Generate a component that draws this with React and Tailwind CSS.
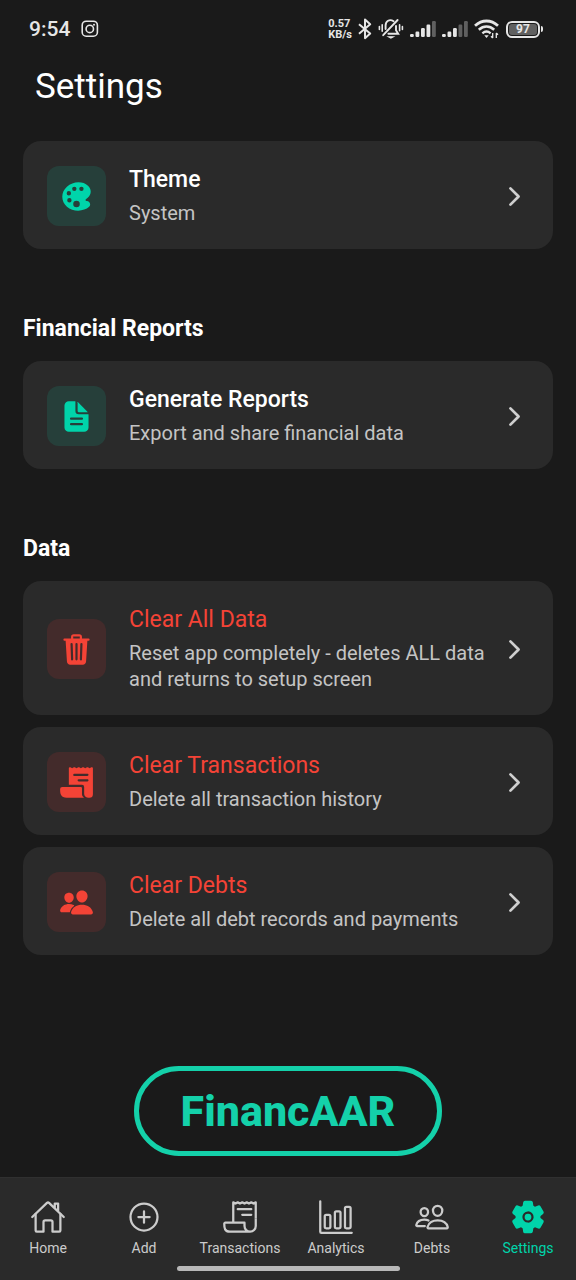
import React from 'react';
import {
  IoColorPalette,
  IoDocumentText,
  IoTrash,
  IoReceipt,
  IoPeople,
  IoHomeOutline,
  IoAddCircleOutline,
  IoReceiptOutline,
  IoBarChartOutline,
  IoPeopleOutline,
  IoSettings,
  IoChevronForward,
} from 'react-icons/io5';

function InstagramGlyph() {
  return (
    <svg className="size-[18px]" viewBox="0 0 18 18" fill="none" stroke="currentColor" strokeWidth="1.6" aria-label="Instagram notification">
      <rect x="1.2" y="1.2" width="15.2" height="15" rx="4" />
      <circle cx="8.8" cy="8.9" r="3.7" />
      <circle cx="13" cy="4.7" r="1" fill="currentColor" stroke="none" />
    </svg>
  );
}

function BluetoothGlyph() {
  return (
    <svg className="h-[22px] w-[14px]" viewBox="0 0 14 22" fill="none" stroke="currentColor" strokeWidth="2" strokeLinejoin="round" aria-label="Bluetooth">
      <path d="M1 6.2 12.2 15.6 7 20.2V1.6L12.2 6.3 1 15.8" />
    </svg>
  );
}

function MutedBellGlyph() {
  return (
    <svg className="h-[22px] w-[26px]" viewBox="0 0 26 22" fill="none" stroke="currentColor" strokeWidth="1.9" strokeLinecap="round" aria-label="Vibrate">
      <path d="M15.6 3.2C11.5.6 7.600 3.200 7.600 7.600v3.400" />
      <path d="M18 8v4.200l2.200 3.600H10.400" />
      <path d="M19.600 2 5.200 17.200" />
      <path d="M1.400 8.500v3M4.200 6.800v6.400M24.400 8.500v3M21.600 6.800v6" strokeWidth="1.600" />
      <path d="M10.600 18.800h4.600l-2.300 1.300z" fill="currentColor" strokeWidth="1.200" />
    </svg>
  );
}

function SignalGlyph({ level }) {
  const bars = [
    [0, 14, 3],
    [5.5, 11.5, 5.5],
    [11, 8, 9],
    [16.5, 4.5, 12.5],
    [22, 1, 16],
  ];
  return (
    <svg className="h-[18px] w-[26px]" viewBox="0 0 26 18" fill="currentColor" aria-label="Mobile signal">
      {bars.map(([x, y, h], i) => (
        <rect key={x} x={x} y={y} width="3.8" height={h} rx="1.2" opacity={i < level ? 1 : 0.35} />
      ))}
    </svg>
  );
}

function WifiGlyph() {
  return (
    <svg className="h-[20px] w-[26px]" viewBox="0 0 26 20" fill="none" stroke="currentColor" aria-label="Wi-Fi">
      <path d="M1 6.800C8 .4 17 .4 24 6.800" strokeWidth="2.800" />
      <path d="M4.800 10.800c4.700-4.200 10.700-4.200 15.400 0" strokeWidth="2.600" />
      <path d="M8.400 14.300c2.600-2.300 5.600-2.300 8.200 0" strokeWidth="2.400" />
      <path d="M10.300 16.200h4.400L12.500 19z" fill="currentColor" stroke="none" />
      <path d="M18.700 14v5M17 17.300l1.700 1.700M22.300 19v-5M24 15.700 22.300 14" strokeWidth="1.300" />
    </svg>
  );
}

function Battery({ value }) {
  return (
    <div className="flex items-center gap-px" aria-label="Battery">
      <div className="flex h-[17px] w-[34px] items-center justify-center rounded-[6px] border-2 border-[#e6e6e6] p-px">
        <span className="flex h-full w-full items-center justify-center rounded-[3px] bg-[#606060] text-[12px] leading-[12px] font-bold">{value}</span>
      </div>
      <span className="h-[6px] w-[2px] rounded-r bg-[#e6e6e6]" />
    </div>
  );
}

function StatusBar() {
  return (
    <div className="flex h-[58px] items-center justify-between pr-[33px] pl-[29px] text-[#e6e6e6]">
      <div className="flex items-center gap-[11px]">
        <time className="text-[21px] leading-6 font-medium">9:54</time>
        <InstagramGlyph />
      </div>
      <div className="flex items-center gap-[6px]">
        <div className="flex flex-col text-[11px] leading-[11px] font-bold">
          <span>0.57</span>
          <span>KB/s</span>
        </div>
        <BluetoothGlyph />
        <MutedBellGlyph />
        <SignalGlyph level={4} />
        <SignalGlyph level={3} />
        <WifiGlyph />
        <Battery value={97} />
      </div>
    </div>
  );
}

function SettingCard({ icon: Icon, title, detail, danger = false }) {
  const tile = danger ? 'bg-[#432b2b] text-[#f44336]' : 'bg-[#263f3a] text-[#00d4aa]';
  return (
    <button type="button" className="flex w-full items-center rounded-[18px] bg-[#2a2a2a] px-6 pt-[25px] pb-[23px] text-left">
      <span className={`flex h-[60px] w-[59px] shrink-0 items-center justify-center rounded-xl ${tile}`}>
        <Icon className="size-[35px]" />
      </span>
      <span className="ml-[23px] flex min-w-0 flex-1 flex-col gap-[6px]">
        <span className={`text-[23px] leading-7 ${danger ? 'text-[#f44336]' : 'font-medium text-white'}`}>{title}</span>
        <span className="text-[20px] leading-[26px] text-[#c4c4c4]">{detail}</span>
      </span>
      <IoChevronForward className="ml-px size-[29px] shrink-0 text-[#cfcfcf]" />
    </button>
  );
}

function Section({ heading, children }) {
  return (
    <section className="mt-[66px]">
      <h2 className="mb-[18px] text-[23px] leading-7 font-bold text-white">{heading}</h2>
      <div className="flex flex-col gap-3">{children}</div>
    </section>
  );
}

const tabs = [
  { label: 'Home', icon: IoHomeOutline },
  { label: 'Add', icon: IoAddCircleOutline },
  { label: 'Transactions', icon: IoReceiptOutline },
  { label: 'Analytics', icon: IoBarChartOutline },
  { label: 'Debts', icon: IoPeopleOutline },
  { label: 'Settings', icon: IoSettings, active: true },
];

function TabBar() {
  return (
    <nav className="sticky bottom-0 mt-[21px] border-t border-[#303030] bg-[#2a2a2a] pb-[9px]">
      <div className="grid grid-cols-6 pt-[21px]">
        {tabs.map(({ label, icon: Icon, active }) => (
          <a
            key={label}
            href={`#${label.toLowerCase()}`}
            aria-current={active ? 'page' : undefined}
            className={`flex flex-col items-center gap-1 ${active ? 'text-[#00d4aa]' : 'text-[#cccccc]'}`}
          >
            <Icon className="size-[36px]" />
            <span className="text-[14px] leading-[18px]">{label}</span>
          </a>
        ))}
      </div>
      <div className="mx-auto mt-[9px] h-[5px] w-[223px] rounded-full bg-[#b8b8b8]" />
    </nav>
  );
}

export default function App() {
  return (
    <div className="flex min-h-screen flex-col bg-[#1a1a1a] font-['Roboto','Noto_Sans',sans-serif]">
      <StatusBar />
      <main className="flex flex-1 flex-col px-[23px] pt-[9px]">
        <h1 className="mb-[34px] ml-3 text-[35px] leading-10 text-white">Settings</h1>
        <SettingCard icon={IoColorPalette} title="Theme" detail="System" />
        <Section heading="Financial Reports">
          <SettingCard icon={IoDocumentText} title="Generate Reports" detail="Export and share financial data" />
        </Section>
        <Section heading="Data">
          <SettingCard danger icon={IoTrash} title="Clear All Data" detail="Reset app completely - deletes ALL data and returns to setup screen" />
          <SettingCard danger icon={IoReceipt} title="Clear Transactions" detail="Delete all transaction history" />
          <SettingCard danger icon={IoPeople} title="Clear Debts" detail="Delete all debt records and payments" />
        </Section>
        <div className="mt-[111px] self-center rounded-full border-[5px] border-[#14d1aa] px-[42px] py-5 text-[43px] leading-10 font-extrabold text-[#14d1aa]">
          FinancAAR
        </div>
      </main>
      <TabBar />
    </div>
  );
}
